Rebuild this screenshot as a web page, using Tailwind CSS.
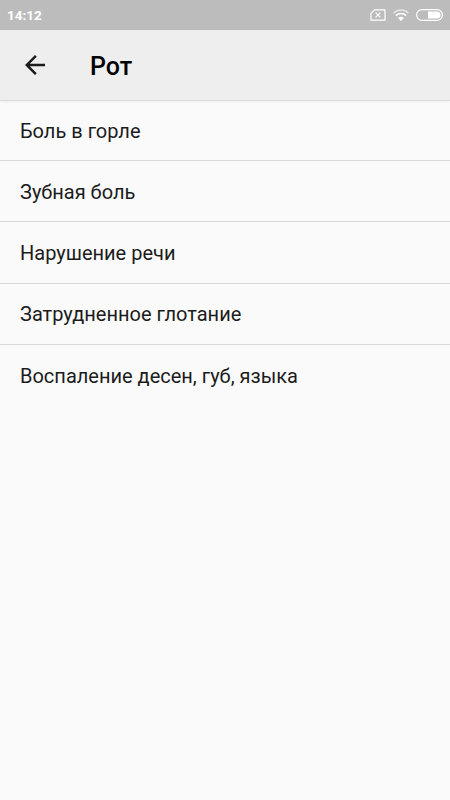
<!DOCTYPE html>
<html lang="ru"><head><meta charset="utf-8"><title>Рот</title>
<script src="https://cdn.jsdelivr.net/npm/@tailwindcss/browser@4"></script></head>
<body class="h-[800px] overflow-hidden bg-[#fafafa] font-[Roboto,sans-serif] text-[#1c1c1c]">
<div class="flex h-[30px] items-center justify-between bg-[#bcbcbc] pl-[7px] pr-[7px] text-white">
<span class="pt-px text-[13.5px] font-bold leading-[29px]">14:12</span>
<div class="flex items-center gap-[7px]">
<svg class="h-3 w-4" viewBox="0 0 16 12" fill="none" stroke="currentColor"><path d="M4.5.8H15v10.4H1V4.3z" stroke-width="1.2" stroke-linejoin="round"/><path d="M5.6 3.6l4.8 4.8M10.4 3.6L5.6 8.4" stroke-width="1.2"/></svg>
<svg class="h-3 w-4" viewBox="0 0 16 12" fill="none" stroke="currentColor"><path d="M.6 4a10.6 10.6 0 0 1 14.8 0" stroke-width="1.5" opacity=".6"/><path d="M2.9 6.6a7.2 7.2 0 0 1 10.2 0" stroke-width="1.7"/><path d="M5.1 9.1a4.2 4.2 0 0 1 5.8 0L8 12z" fill="currentColor" stroke="none"/></svg>
<svg class="h-3 w-[27px]" viewBox="0 0 27 12" fill="none"><rect x=".6" y=".6" width="25.8" height="10.8" rx="5.4" stroke="currentColor" stroke-width="1.2"/><path d="M12 2.5h9a3.5 3.5 0 0 1 0 7h-9z" fill="currentColor"/></svg>
</div></div>
<header class="flex h-[71px] items-center border-b border-[#dcdcdc] bg-[#eeeeee] pl-[20px] shadow-[0_1px_3px_rgba(0,0,0,0.06)]">
<svg class="h-[30px] w-[30px]" viewBox="0 0 24 24" fill="#1c1c1c"><path d="M20 11H7.83l5.59-5.59L12 4l-8 8 8 8 1.41-1.41L7.83 13H20v-2z"/></svg>
<h1 class="ml-10 pt-[3px] text-[25px] font-medium text-black">Рот</h1></header>
<ul class="text-[20px]">
<li class="flex h-[60px] items-center border-b border-[#d8d8d8] px-5">Боль в горле</li>
<li class="flex h-[61px] items-center border-b border-[#d8d8d8] px-5 pt-px">Зубная боль</li>
<li class="flex h-[62px] items-center border-b border-[#d8d8d8] px-5">Нарушение речи</li>
<li class="flex h-[61px] items-center border-b border-[#d8d8d8] px-5">Затрудненное глотание</li>
<li class="flex h-[61px] items-center px-5">Воспаление десен, губ, языка</li>
</ul></body></html>
